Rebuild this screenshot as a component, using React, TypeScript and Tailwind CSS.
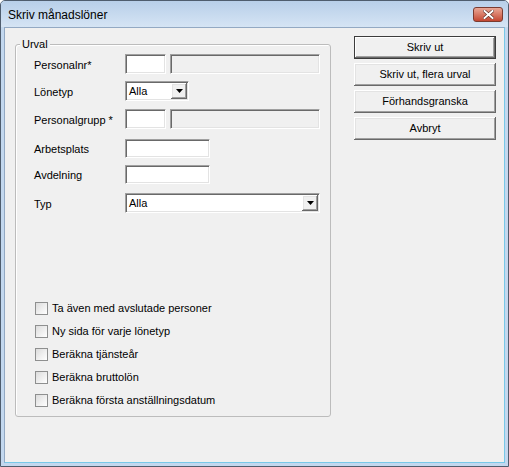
import React from "react";

const font = "font-['Liberation_Sans',Arial,sans-serif]";

const sunken =
  "border border-t-[#a0a0a0] border-l-[#a0a0a0] border-r-[#ffffff] border-b-[#ffffff] shadow-[inset_1px_1px_0_#696969,inset_-1px_-1px_0_#e3e3e3]";

const raised =
  "bg-[#f0f0f0] shadow-[inset_-1px_-1px_0_#696969,inset_1px_1px_0_#ffffff,inset_-2px_-2px_0_#a0a0a0,inset_2px_2px_0_#e3e3e3]";

function Arrow() {
  return (
    <svg width="7" height="4" viewBox="0 0 7 4">
      <path d="M0 0h7L3.5 4z" fill="#000" />
    </svg>
  );
}

function Combo({ width, value }: { width: string; value: string }) {
  return (
    <div className={`${sunken} ${width} h-[20px] bg-white flex items-center`}>
      <span className="flex-1 pl-[3px] text-[11px] leading-none">{value}</span>
      <div className={`${raised} w-[16px] h-[16px] mr-[1px] flex items-center justify-center`}>
        <Arrow />
      </div>
    </div>
  );
}

function Row({
  label,
  className,
  children,
}: {
  label: string;
  className: string;
  children: React.ReactNode;
}) {
  return (
    <div className={`flex items-center ${className}`}>
      <span className="w-[91px] pt-[2px] text-[11px] leading-none">{label}</span>
      {children}
    </div>
  );
}

function Check({ label }: { label: string }) {
  return (
    <div className="flex items-center gap-[4px] h-[13px] ml-[1px]">
      <div className="w-[13px] h-[13px] border border-[#8e8f8f] bg-gradient-to-br from-[#dcdcdc] to-[#ffffff]" />
      <span className="text-[11px] leading-none">{label}</span>
    </div>
  );
}

function Btn({ label, primary }: { label: string; primary?: boolean }) {
  return (
    <div
      className={`w-[142px] h-[23px] flex items-center justify-center text-[11px] ${
        primary
          ? "border border-[#3c3c3c] bg-[#f0f0f0] shadow-[inset_-1px_-1px_0_#696969,inset_1px_1px_0_#ffffff,inset_-2px_-2px_0_#a0a0a0]"
          : raised
      }`}
    >
      {label}
    </div>
  );
}

export default function App() {
  return (
    <div className={`w-[509px] h-[467px] bg-white text-black ${font}`}>
      <div className="w-[509px] h-[467px] flex flex-col border border-[#4f5d6e] rounded-t-[5px] bg-[#c3d8ef] overflow-hidden">
        {/* Title bar */}
        <div className="h-[26px] flex items-center justify-between pl-[7px] pr-[5px] bg-gradient-to-b from-[#b8cfe9] to-[#d5e4f4]">
          <span className="text-[12px] pt-[1px]">Skriv månadslöner</span>
          <div className="w-[30px] h-[15px] mt-[1px] rounded-[3px] border border-[#7b3b30] bg-gradient-to-b from-[#e9a796] to-[#c34631] flex items-center justify-center">
            <svg width="11" height="9" viewBox="0 0 11 9">
              <path d="M1.5 1l8 7M9.5 1l-8 7" stroke="#5a2a22" strokeWidth="3.2" strokeLinecap="square" />
              <path d="M1.5 1l8 7M9.5 1l-8 7" stroke="#ffffff" strokeWidth="2" strokeLinecap="square" />
            </svg>
          </div>
        </div>

        {/* Client area */}
        <div className="flex-1 mx-[3px] mb-[3px] border border-[#93a9c3] border-r-[#78c8e8] border-b-[#78c8e8] bg-[#f0f0f0] flex pl-[10px]">
          <div className="relative mt-[16px] w-[316px] h-[373px] border border-[#bcbcbc] rounded-[3px] shadow-[inset_1px_1px_0_#ffffff] pt-[9px] pl-[18px]">
            <span className="absolute left-[4px] -top-[8px] px-[2px] bg-[#f0f0f0] text-[11px] leading-[14px]">
              Urval
            </span>

            <Row label="Personalnr*" className="h-[20px]">
              <div className={`${sunken} w-[41px] h-[20px] bg-white`} />
              <div className={`${sunken} w-[150px] h-[20px] ml-[4px] bg-[#f0f0f0]`} />
            </Row>
            <Row label="Lönetyp" className="h-[20px] mt-[7px]">
              <Combo width="w-[64px]" value="Alla" />
            </Row>
            <Row label="Personalgrupp *" className="h-[20px] mt-[8px]">
              <div className={`${sunken} w-[41px] h-[20px] bg-white`} />
              <div className={`${sunken} w-[150px] h-[20px] ml-[4px] bg-[#f0f0f0]`} />
            </Row>
            <Row label="Arbetsplats" className="h-[19px] mt-[10px]">
              <div className={`${sunken} w-[85px] h-[19px] bg-white`} />
            </Row>
            <Row label="Avdelning" className="h-[19px] mt-[7px]">
              <div className={`${sunken} w-[85px] h-[19px] bg-white`} />
            </Row>
            <Row label="Typ" className="h-[20px] mt-[9px]">
              <Combo width="w-[195px]" value="Alla" />
            </Row>

            <div className="mt-[89px] flex flex-col gap-[10px]">
              <Check label="Ta även med avslutade personer" />
              <Check label="Ny sida för varje lönetyp" />
              <Check label="Beräkna tjänsteår" />
              <Check label="Beräkna bruttolön" />
              <Check label="Beräkna första anställningsdatum" />
            </div>
          </div>

          <div className="ml-[23px] mt-[8px] flex flex-col gap-[4px]">
            <Btn label="Skriv ut" primary />
            <Btn label="Skriv ut, flera urval" />
            <Btn label="Förhandsgranska" />
            <Btn label="Avbryt" />
          </div>
        </div>
      </div>
    </div>
  );
}
